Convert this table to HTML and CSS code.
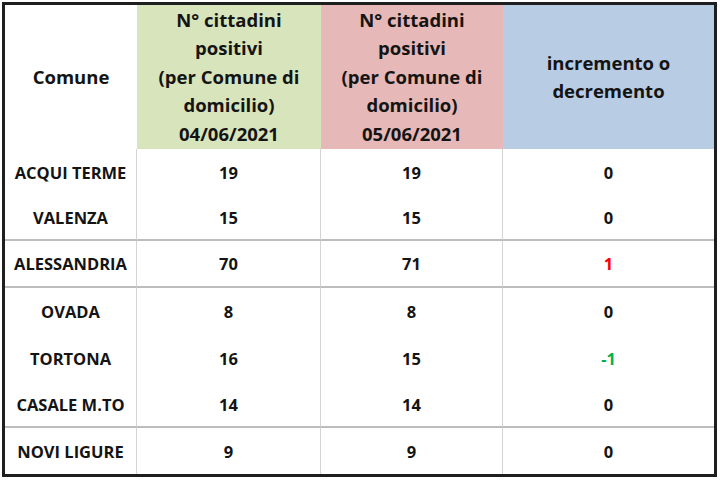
FILE: index.html
```html
<!DOCTYPE html>
<html lang="it">
<head>
<meta charset="utf-8">
<link rel="stylesheet" href="styles.css">
</head>
<body>
<div class="wrap">
<table class="grid">
  <colgroup>
    <col class="c1"><col class="c2"><col class="c3"><col class="c4">
  </colgroup>
  <thead>
    <tr class="head">
      <th class="h-comune">Comune</th>
      <th class="h-green">N° cittadini<br>positivi<br>(per Comune di<br>domicilio)<br>04/06/2021</th>
      <th class="h-pink">N° cittadini<br>positivi<br>(per Comune di<br>domicilio)<br>05/06/2021</th>
      <th class="h-blue">incremento o<br>decremento</th>
    </tr>
  </thead>
  <tbody>
    <tr class="r46"><td>ACQUI TERME</td><td>19</td><td>19</td><td>0</td></tr>
    <tr class="r46 sep"><td>VALENZA</td><td>15</td><td>15</td><td>0</td></tr>
    <tr class="r47 sep"><td>ALESSANDRIA</td><td>70</td><td>71</td><td class="up">1</td></tr>
    <tr class="r47"><td>OVADA</td><td>8</td><td>8</td><td>0</td></tr>
    <tr class="r47"><td>TORTONA</td><td>16</td><td>15</td><td class="down">-1</td></tr>
    <tr class="r46 sep"><td>CASALE M.TO</td><td>14</td><td>14</td><td>0</td></tr>
    <tr class="r46"><td>NOVI LIGURE</td><td>9</td><td>9</td><td>0</td></tr>
  </tbody>
</table>
</div>
</body>
</html>
```
FILE: styles.css
```css
html, body {
  margin: 0;
  padding: 0;
  background: #ffffff;
}
.wrap {
  padding: 2px 0 0 2px;
}
.grid {
  width: 715px;
  border: 3px solid #1e1e1e;
  border-collapse: separate;
  border-spacing: 0;
  table-layout: fixed;
  font-family: "Open Sans", Lato, sans-serif;
  font-weight: bold;
  color: #141414;
}
.c1 { width: 132px; }
.c2 { width: 184px; }
.c3 { width: 182px; }
.c4 { width: 211px; }
.head { height: 144px; }
.head th {
  font-size: 18.5px;
  line-height: 28.5px;
  font-weight: bold;
  text-align: center;
  vertical-align: middle;
  padding: 0;
}
.h-comune { background: #ffffff; }
.h-green { background: #d8e4bc; }
.h-pink { background: #e6b8b7; }
.h-blue { background: #b8cce4; }
tbody td {
  font-size: 16.5px;
  text-align: center;
  vertical-align: middle;
  padding: 0;
  border-right: 1px solid #d4d4d4;
}
tbody td:last-child { border-right: none; }
.r46 { height: 46px; }
.r47 { height: 47px; }
.sep td { border-bottom: 2px solid #bdbdbd; }
.up { color: #ff0000; }
.down { color: #00b050; }
```
